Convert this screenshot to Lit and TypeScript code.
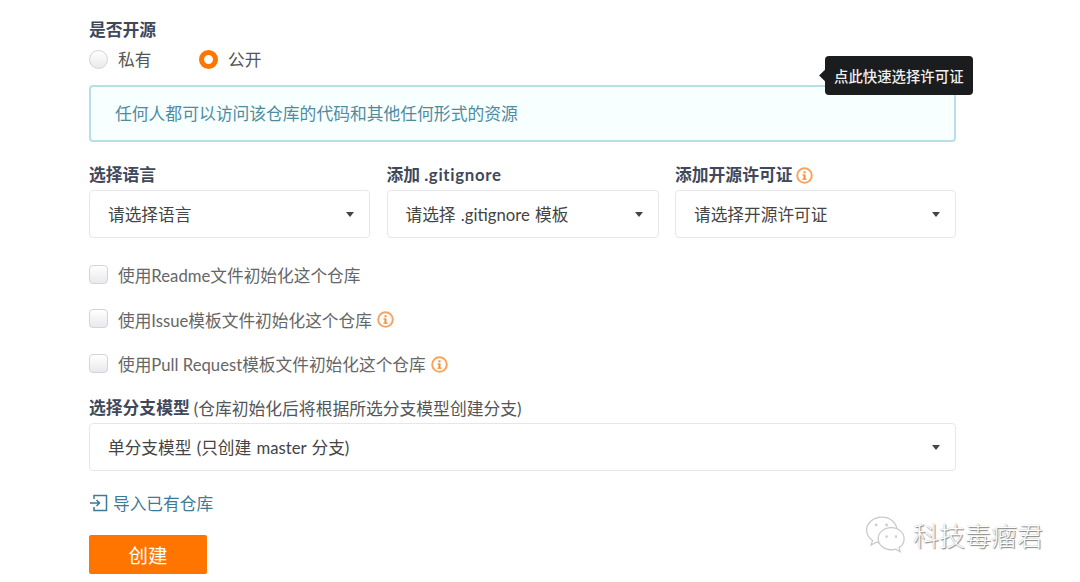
import { LitElement, html, css, svg } from "lit";
import { customElement } from "lit/decorators.js";

const info = html`<svg class="info" viewBox="0 0 17 17" width="17" height="17">
  <circle cx="8.500" cy="8.500" r="7.300" fill="none" stroke="#f9a45e" stroke-width="2"></circle>
  <rect x="7.500" y="7.500" width="2" height="5" fill="#f58a32"></rect>
  <rect x="7.500" y="4.300" width="2" height="2" fill="#f58a32"></rect>
  <rect x="6.300" y="7.500" width="2" height="1" fill="#f58a32"></rect>
  <rect x="6.300" y="11.700" width="4.400" height="1" fill="#f58a32"></rect>
</svg>`;

const caret = html`<span class="caret"></span>`;

const bubble = svg`<path d="M17 2C9 2 2.500 7.500 2.500 14.500c0 4 2.200 7.300 5.700 9.600L6.800 28.500l5-2.700c1.500.5 3.200.8 5 .8" fill="#fff" stroke="#c9c9c9" stroke-width="1.200"/>
<path d="M17 2c7.500 0 13.500 4.800 14.300 11" fill="none" stroke="#c9c9c9" stroke-width="1.200"/>
<path d="M26 12c-7 0-12.500 4.600-12.500 10.500S19 33 26 33c1.500 0 3-.2 4.200-.6l4.300 2.400-1.100-3.800c3-1.900 4.800-4.900 4.800-8.500C38.200 16.600 33 12 26 12z" fill="#fff" stroke="#c9c9c9" stroke-width="1.200"/>
<circle cx="11.500" cy="9.500" r="1.400" fill="#cfcfcf"/><circle cx="21.500" cy="9.500" r="1.400" fill="#cfcfcf"/>
<circle cx="21.500" cy="20.500" r="1.200" fill="#cfcfcf"/><circle cx="30.500" cy="20.500" r="1.200" fill="#cfcfcf"/>`;

@customElement("app-root")
export class AppRoot extends LitElement {
  static styles = css`
    :host {
      display: block;
      position: relative;
      width: 1080px;
      height: 582px;
      overflow: hidden;
      background: #fff;
      font-family: Lato, "Noto Sans CJK SC", sans-serif;
      color: #40485b;
    }
    .form {
      width: 867px;
      padding: 20px 0 0 89px;
      display: flex;
      flex-direction: column;
    }
    .label {
      font-size: 16.800px;
      font-weight: 700;
      line-height: 20px;
      color: #40485b;
    }
    .wide { letter-spacing: 0.700px; }
    .note { font-weight: 400; font-size: 16.800px; color: #555; }
    .radios {
      display: flex;
      align-items: center;
      height: 22px;
      margin-top: 8px;
      font-size: 16.700px;
      color: #555;
    }
    .radio-item { display: flex; align-items: center; gap: 10px; width: 110px; }
    .radio {
      width: 19px; height: 19px; border-radius: 50%;
      box-sizing: border-box;
      border: 1px solid #d4d4d5;
      background: linear-gradient(#fff, #e9e9ee);
    }
    .radio.on { border: 5.500px solid #ff7500; background: #fff; }
    .alert {
      box-sizing: border-box;
      height: 57px;
      margin-top: 15px;
      padding: 0 0 2px 24px;
      display: flex;
      align-items: center;
      background: #f8ffff;
      border: 2px solid #b9dfe6;
      border-radius: 4px;
      color: #4f8b9f;
      font-size: 16.800px;
    }
    .row {
      display: flex;
      justify-content: space-between;
      margin-top: 23px;
    }
    .field { display: flex; flex-direction: column; gap: 5px; }
    .w1 { width: 281px; }
    .w2 { width: 272px; }
    .label-line { display: flex; align-items: center; gap: 4px; height: 20px; }
    .select {
      box-sizing: border-box;
      height: 48px;
      padding: 0 19px 0 18px;
      display: flex;
      align-items: center;
      justify-content: space-between;
      border: 1px solid #e6e7ea;
      border-radius: 4px;
      background: #fff;
      font-size: 16.700px;
      word-spacing: 1px;
      color: #444;
    }
    .caret {
      width: 0; height: 0;
      border-left: 4.500px solid transparent;
      border-right: 4.500px solid transparent;
      border-top: 5px solid #444;
      margin-right: -4px;
    }
    .checks { display: flex; flex-direction: column; gap: 24.500px; margin-top: 27px; }
    .check {
      display: flex; align-items: center; height: 20px;
      font-size: 16.700px; color: #666;
    }
    .box {
      box-sizing: border-box;
      width: 19px; height: 19px; margin: -2px 10px 0 0;
      border: 1px solid #d4d4d5; border-radius: 4px;
      background: linear-gradient(#fff, #e9e9ee);
    }
    .check .info { margin-left: 5px; }
    .branch { margin-top: 24px; display: flex; flex-direction: column; gap: 5px; }
    .link {
      display: flex; align-items: center; gap: 5px;
      margin-top: 22px; height: 20px;
      font-size: 16.700px; color: #3d7a96;
    }
    .btn {
      margin-top: 22px;
      width: 118px; height: 39px;
      display: flex; align-items: center; justify-content: center;
      background: #ff7500;
      border-radius: 2px;
      color: #fff;
      font-size: 19.500px;
    }
    .tip {
      position: absolute;
      left: 825px; top: 56px;
      width: 148px; height: 39px;
      box-sizing: border-box;
      padding-left: 9px;
      display: flex; align-items: center;
      background: #1b1c1d;
      border-radius: 4px;
      color: #f0f0f0;
      font-size: 14.400px;
      font-weight: 500;
    }
    .tip::before {
      content: "";
      position: absolute;
      left: -4px; top: 15px;
      width: 9px; height: 9px;
      background: #1b1c1d;
      transform: rotate(45deg);
    }
    .mark {
      position: absolute;
      left: 864px; top: 513px;
      display: flex; align-items: center; gap: 7px;
    }
    .mark-text {
      font-size: 26px;
      line-height: 36px;
      margin-top: 5px;
      color: #fff;
      font-weight: 300;
      text-shadow: 1px 1px 1px #808080, 0 0 1px #949494;
    }
  `;

  render() {
    return html`
      <div class="form">
        <div class="label">是否开源</div>
        <div class="radios">
          <div class="radio-item"><span class="radio"></span>私有</div>
          <div class="radio-item"><span class="radio on"></span>公开</div>
        </div>
        <div class="alert">任何人都可以访问该仓库的代码和其他任何形式的资源</div>
        <div class="row">
          <div class="field w1">
            <div class="label label-line">选择语言</div>
            <div class="select">请选择语言${caret}</div>
          </div>
          <div class="field w2">
            <div class="label label-line"><span>添加 <span class="wide">.gitignore</span></span></div>
            <div class="select"><span>请选择 .gitignore 模板</span>${caret}</div>
          </div>
          <div class="field w1">
            <div class="label label-line">添加开源许可证 ${info}</div>
            <div class="select">请选择开源许可证${caret}</div>
          </div>
        </div>
        <div class="checks">
          <div class="check"><span class="box"></span>使用Readme文件初始化这个仓库</div>
          <div class="check"><span class="box"></span>使用Issue模板文件初始化这个仓库${info}</div>
          <div class="check"><span class="box"></span>使用Pull Request模板文件初始化这个仓库${info}</div>
        </div>
        <div class="branch">
          <div class="label-line">
            <span class="label">选择分支模型</span>
            <span class="note">(仓库初始化后将根据所选分支模型创建分支)</span>
          </div>
          <div class="select"><span>单分支模型 (只创建 master 分支)</span>${caret}</div>
        </div>
        <div class="link">
          <svg viewBox="0 0 19 18" width="19" height="18" fill="none" stroke="#3d7a96" stroke-width="1.500">
            <path d="M5 5V1.500h12.500v15H5V13"></path>
            <path d="M1 9h9.500M7.500 6l3 3-3 3"></path>
          </svg>
          导入已有仓库
        </div>
        <div class="btn">创建</div>
      </div>
      <div class="tip">点此快速选择许可证</div>
      <div class="mark">
        <svg viewBox="0 0 40 36" width="42" height="38">${bubble}</svg>
        <span class="mark-text">科技毒瘤君</span>
      </div>
    `;
  }
}
